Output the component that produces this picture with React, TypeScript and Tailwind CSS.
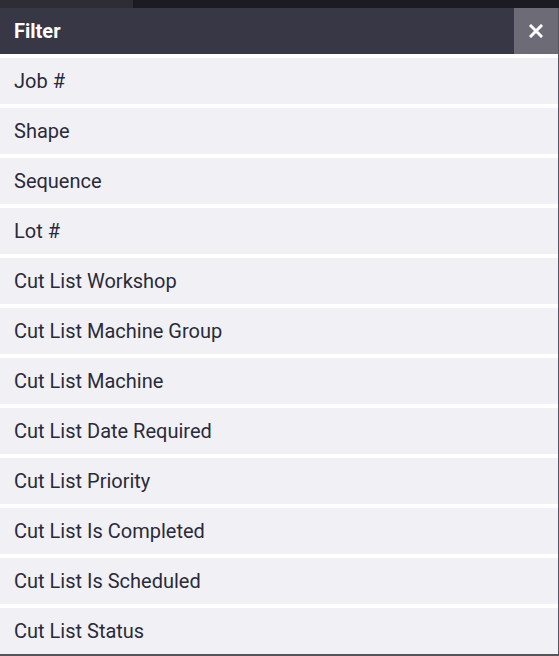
const fields = [
	"Job #",
	"Shape",
	"Sequence",
	"Lot #",
	"Cut List Workshop",
	"Cut List Machine Group",
	"Cut List Machine",
	"Cut List Date Required",
	"Cut List Priority",
	"Cut List Is Completed",
	"Cut List Is Scheduled",
	"Cut List Status",
];

const App = () => {
	return (
		<div className="w-[559px] h-[656px] overflow-hidden bg-[#55545c] font-['Roboto',sans-serif]">
			<div className="flex h-2">
				<div className="w-[133px] bg-[#2e2d35]" />
				<div className="flex-1 bg-[#1c1b23]" />
			</div>
			<div className="w-[558px] bg-white">
				<div className="flex h-[46px] items-center bg-[#383746]">
					<h2 className="flex-1 pl-[14px] text-[20px] font-bold text-white">Filter</h2>
					<button className="flex h-full w-[44px] items-center justify-center bg-[#6c6b76]">
						<svg width="14" height="14" viewBox="0 0 14 14">
							<path d="M2 2L12 12M12 2L2 12" stroke="white" strokeWidth="3" strokeLinecap="square" />
						</svg>
					</button>
				</div>
				<div className="flex flex-col gap-1 pt-1">
					{fields.map((field) => (
						<div
							key={field}
							className="flex h-[46px] items-center bg-[#f1f1f5] pl-[14px] text-[20px] text-[#2b2a3a]"
						>
							{field}
						</div>
					))}
				</div>
			</div>
		</div>
	);
};

export default App;
